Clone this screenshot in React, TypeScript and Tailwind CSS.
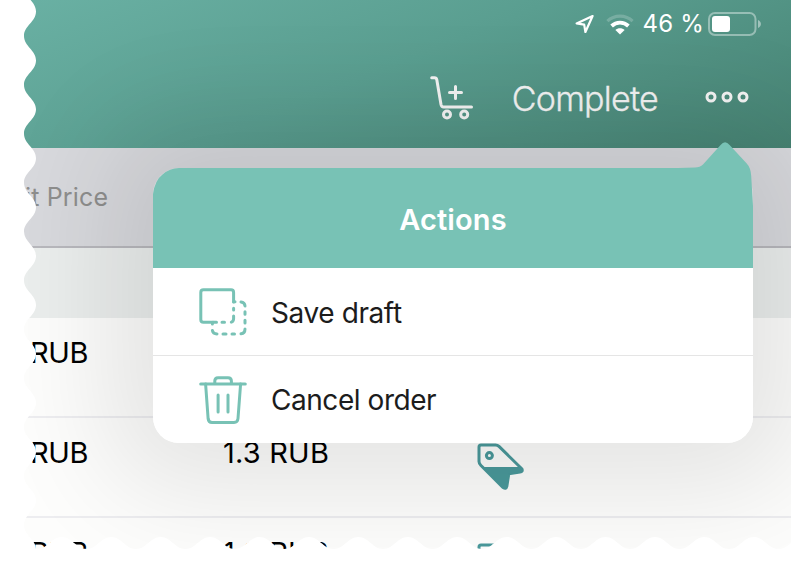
import React from "react";

const LEFT_PERIOD = 48.9;
const BOTTOM_PERIOD = 49.43;

// Wavy torn edge on the left side: a smooth wave between x=24 and x=36.
function leftEdge() {
  const h = LEFT_PERIOD / 2;
  const c = h * 0.42;
  let y = 36 - LEFT_PERIOD;
  let d = `M0 ${y} L24 ${y}`;
  for (let i = 0; i < 24; i++) {
    const from = i % 2 === 0 ? 24 : 36;
    const to = i % 2 === 0 ? 36 : 24;
    d += ` C${from} ${y + c} ${to} ${y + h - c} ${to} ${y + h}`;
    y += h;
  }
  return `${d} L0 ${y} Z`;
}

function bottomEdge() {
  const h = BOTTOM_PERIOD / 2;
  const c = h * 0.42;
  let x = 61.8 - BOTTOM_PERIOD * 2;
  let d = `M${x} 580 L${x} 537`;
  for (let i = 0; i < 36; i++) {
    const from = i % 2 === 0 ? 537 : 549;
    const to = i % 2 === 0 ? 549 : 537;
    d += ` C${x + c} ${from} ${x + h - c} ${to} ${x + h} ${to}`;
    x += h;
  }
  return `${d} L${x} 580 Z`;
}

function TornEdges() {
  return (
    <svg className="pointer-events-none absolute inset-0" width="791" height="573" fill="#fff">
      <path d={leftEdge()} />
      <path d={bottomEdge()} />
      <rect y="549" width="791" height="24" />
    </svg>
  );
}

function LocationIcon() {
  return (
    <svg width="20" height="20" viewBox="0 0 20 20" fill="none" stroke="#fff" strokeWidth="2.2" strokeLinejoin="round">
      <path d="M17.6 2 L1.6 9.4 L9.2 10.6 L10.4 18 Z" />
    </svg>
  );
}

function WifiIcon() {
  return (
    <svg width="28" height="21" viewBox="0 0 28 21" fill="none" strokeWidth="3.2">
      <path d="M1.4 7.2 C8.4 0.4 19.6 0.4 26.6 7.2" stroke="#fff" strokeOpacity="0.2" />
      <path d="M5.6 12 C10.3 7.6 17.7 7.6 22.4 12" stroke="#fff" strokeWidth="3.8" />
      <path d="M14 20.6 L9.4 16 C11.8 13.6 16.2 13.6 18.6 16 Z" fill="#fff" />
    </svg>
  );
}

function BatteryIcon() {
  return (
    <svg width="54" height="24" viewBox="0 0 54 24">
      <rect x="1" y="1" width="46.5" height="22" rx="6" fill="none" stroke="#fff" strokeOpacity="0.4" strokeWidth="2" />
      <rect x="4" y="4" width="18" height="16" rx="3" fill="#fff" />
      <path d="M50 8 C53.9 9.5 53.9 14.5 50 16 Z" fill="#fff" fillOpacity="0.45" />
    </svg>
  );
}

function CartIcon() {
  return (
    <svg width="44" height="44" viewBox="0 0 44 44" fill="none" stroke="#f3f3f3" strokeWidth="3" strokeLinecap="round" strokeLinejoin="round">
      <path d="M1.7 1.7 H4.5 Q6.4 1.7 6.8 3.7 L11 28.5 Q11.5 31 13.5 31 H41.5" />
      <path d="M25.5 10.5 V22.5 M19.5 16.5 H31.5" />
      <circle cx="17" cy="38.5" r="3.5" />
      <circle cx="34.2" cy="38.5" r="3.5" />
    </svg>
  );
}

function MoreIcon() {
  return (
    <svg width="44" height="12" viewBox="0 0 44 12" fill="none" stroke="#f3f3f3" strokeWidth="3">
      <circle cx="6" cy="6" r="4" />
      <circle cx="22" cy="6" r="4" />
      <circle cx="38" cy="6" r="4" />
    </svg>
  );
}

function DraftIcon() {
  return (
    <svg width="48" height="48" viewBox="0 0 48 48" fill="none" stroke="#78c2b5" strokeWidth="3" strokeLinecap="round" strokeLinejoin="round">
      <path d="M14 34.3 H4.5 Q1.8 34.3 1.8 31.5 V4.5 Q1.8 1.8 4.5 1.8 H32 Q34.6 1.8 34.6 4.5 V14" />
      <path d="M34.6 20.2 V22 M34.6 28 V30.5 Q34.6 33.5 32.3 34.1 M25.5 34.3 H23 M17.5 34.3 H14" />
      <path d="M34.6 13.7 H36 M42 13.9 Q45.8 14.4 46 18 M46 23.7 V26.2 M46 32.2 V35 M46 41 Q46 45.3 42 45.8 M35.5 46 H33 M27 46 H24 M18 46 Q14 45.8 13.4 42.5 M13.4 36 V35" />
    </svg>
  );
}

function TrashIcon() {
  return (
    <svg width="48" height="48" viewBox="0 0 48 48" fill="none" stroke="#78c2b5" strokeWidth="3" strokeLinecap="round" strokeLinejoin="round">
      <path d="M1.7 8 H46.3" />
      <path d="M15.8 7 V5 Q15.8 1.7 19 1.7 H29 Q32.4 1.7 32.4 5 V7" />
      <path d="M6.6 8 L9.1 42.5 Q9.5 46.4 13 46.4 H35 Q38.7 46.4 39 42.5 L41.6 8" />
      <path d="M19.1 19 V36 M29 19 V36" />
    </svg>
  );
}

function TagIcon() {
  return (
    <svg width="48" height="48" viewBox="0 0 48 48" fill="none" stroke="#4a999b" strokeWidth="3" strokeLinejoin="round">
      <path d="M4 2 H18.5 Q20.5 2 22 3.4 L45 26 Q46 28.6 43 29 L31.8 30.8 L29.8 43.4 Q29 46.6 26.2 44.6 L4 22.5 Q2 20.4 2 18.5 V4 Q2 2 4 2 Z" />
      <path d="M6.5 24.5 H43 L44.5 27 L43 29 L31.8 30.8 L29.8 43.4 L27.5 45 Z" fill="#4a999b" strokeWidth="1" />
      <circle cx="12.4" cy="12.6" r="3" />
    </svg>
  );
}

function PopoverHeaderShape() {
  return (
    <svg className="absolute left-0 -top-[26px]" width="600" height="126" viewBox="0 0 600 126" fill="#78c2b5">
      <path d="M0 126 V52 Q2 38 9.5 32.5 Q16.5 26.2 26 26 H525 L542 25.6 Q547 25.6 550 22.6 L567.6 3 Q572 -2.6 576.6 3 L593.5 21.2 Q597.8 25.6 598.2 34 L600 64 V126 Z" />
    </svg>
  );
}

function ActionsPopover() {
  return (
    <div className="absolute left-[153px] top-[168px] flex w-[600px] flex-col">
      <PopoverHeaderShape />
      <div className="relative flex h-[100px] items-center justify-center pt-[3px] text-[29px] font-semibold tracking-[0.1px] text-white">
        Actions
      </div>
      <div className="flex flex-col rounded-b-[26px] bg-white">
        <button className="flex h-[88px] items-center gap-[24px] border-b border-[#e5e5e5] pl-[46px] pt-px text-left text-[28px] tracking-[-0.4px] text-[#1c1c1c]">
          <DraftIcon />
          <span className="pt-px">Save draft</span>
        </button>
        <button className="flex h-[87px] items-center gap-[24px] pl-[46px] pt-px text-left text-[28px] tracking-[-0.45px] text-[#1c1c1c]">
          <TrashIcon />
          Cancel order
        </button>
      </div>
    </div>
  );
}

function PriceRow({ price }: { price?: string }) {
  return (
    <div className="flex h-[100px] shrink-0 border-b-2 border-[#ededf0] pt-[17px] text-[29px] leading-[36px] text-black">
      <div className="w-[88px] shrink-0 text-right tracking-[-0.4px]">RUB</div>
      <div className="w-[389px] shrink-0 pl-[135px] tracking-[0.2px]">{price}</div>
      {price && (
        <div className="pt-2">
          <TagIcon />
        </div>
      )}
    </div>
  );
}

export default function App() {
  return (
    <div className="relative h-[573px] w-[791px] overflow-hidden bg-white font-[Inter,'Liberation_Sans',sans-serif]">
      <div className="flex h-[573px] flex-col overflow-hidden">
        <header className="flex h-[148px] shrink-0 flex-col bg-[linear-gradient(158deg,#6ab1a4_0%,#5a9e90_48%,#468272_100%)]">
          <div className="flex h-12 items-center justify-end pr-[29px] text-[24px] text-white">
            <LocationIcon />
            <span className="ml-[11px] pt-px"><WifiIcon /></span>
            <span className="ml-2 mr-1 whitespace-nowrap tracking-[0.2px]">46 %</span>
            <BatteryIcon />
          </div>
          <div className="flex h-[100px] items-center justify-end pr-[42px]">
            <CartIcon />
            <span className="ml-[38px] mr-[47px] text-[34px] font-[350] tracking-[-0.75px] text-[#f3f3f3] [-webkit-text-stroke:0.3px_#f3f3f3]">Complete</span>
            <span className="-mt-0.5"><MoreIcon /></span>
          </div>
        </header>
        <div className="flex h-[100px] shrink-0 items-center border-b-2 border-[#b8b8bd] bg-[#d8d9dd] pl-[25px] pt-0.5 text-[25px] tracking-[0.15px] text-[#8e8e8d]">
          it Price
        </div>
        <div className="h-[70px] shrink-0 bg-[#ebeeed]" />
        <div className="flex flex-col bg-[#fdfdfc]">
          <PriceRow />
          <PriceRow price="1.3 RUB" />
          <PriceRow price="1.3 RUB" />
        </div>
      </div>
      <div className="absolute left-[153px] top-[168px] h-[275px] w-[600px] rounded-[26px] shadow-[0_0_110px_50px_rgba(0,0,0,0.098)]" />
      <ActionsPopover />
      <TornEdges />
    </div>
  );
}
